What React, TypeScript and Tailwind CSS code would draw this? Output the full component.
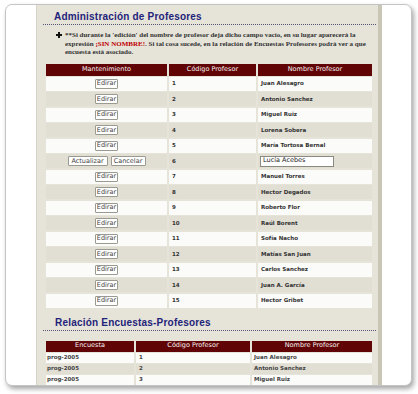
import React from 'react';

const profesores: [string, string][] = [
  ['1', 'Juan Alesagro'],
  ['2', 'Antonio Sanchez'],
  ['3', 'Miguel Ruiz'],
  ['4', 'Lorena Sobera'],
  ['5', 'María Tortosa Bernal'],
  ['6', 'Lucía Acebes'],
  ['7', 'Manuel Torres'],
  ['8', 'Hector Degados'],
  ['9', 'Roberto Flor'],
  ['10', 'Raúl Borent'],
  ['11', 'Sofía Nacho'],
  ['12', 'Matías San Juan'],
  ['13', 'Carlos Sanchez'],
  ['14', 'Juan A. García'],
  ['15', 'Hector Gribet'],
];

const relacion: [string, string, string][] = [
  ['prog-2005', '1', 'Juan Alesagro'],
  ['prog-2005', '2', 'Antonio Sanchez'],
  ['prog-2005', '3', 'Miguel Ruiz'],
];

function Btn({ label, w }: { label: string; w: string }) {
  return (
    <span
      className={`${w} h-[10px] flex items-center justify-center bg-white border border-[#9a9a90] rounded-[1px] text-[6.5px] leading-none font-normal text-[#444] font-['DejaVu_Sans',sans-serif]`}
    >
      {label}
    </span>
  );
}

function SectionTitle({ text, className }: { text: string; className: string }) {
  return (
    <div className={`ml-[6px] mr-[2px] border-b border-dotted border-[#55557a] ${className}`}>
      <div className="pl-[11px] h-[14px] leading-[14px] text-[10px] font-bold tracking-[0.2px] text-[#1f237a] font-['Liberation_Sans',sans-serif]">
        {text}
      </div>
    </div>
  );
}

export default function App() {
  return (
    <div className="w-[418px] h-[394px] bg-white pt-[4px] pl-[5px]">
      <div className="w-[407px] h-[382px] flex overflow-hidden rounded-[7px] border border-[#c4c4c4] bg-white shadow-[2px_3px_5px_rgba(0,0,0,0.35)]">
        <div className="w-[30px] shrink-0" />
        <div className="w-[346px] shrink-0 h-full bg-[#e6e3d9] border-l border-[#d6d3c8] border-r-[4px] border-r-[#c9c6b8] pt-[5px]">
          <SectionTitle text="Administración de Profesores" className="" />

          <div className="mt-[6px] ml-[19px] mr-[2px] flex gap-[3px]">
            <svg width="6" height="6" viewBox="0 0 6 6" className="mt-[1px] shrink-0">
              <path d="M2 0h2v2h2v2H4v2H2V4H0V2h2z" fill="#111" />
            </svg>
            <p className="whitespace-nowrap text-[7px] leading-[8.5px] font-bold text-[#333] font-['Liberation_Serif',serif]">
              **Si durante la 'edición' del nombre de profesor deja dicho campo vacío, en su lugar aparecerá la
              <br />
              expresión <span className="text-[#c00000]">¡SIN NOMBRE!</span>. Si tal cosa sucede, en la relación de Encuestas Profesores podrá ver a que
              <br />
              encuesta está asociado.
            </p>
          </div>

          <div className="mt-[7px] ml-[9px] w-[326px]">
            <div className="grid grid-cols-[121px_87px_114px] gap-x-[2px] h-[12px] mb-[1px] text-[6.5px] text-[#f8f2f2] font-['DejaVu_Sans',sans-serif]">
              <div className="bg-[#600406] flex items-center justify-center">Mantenimiento</div>
              <div className="bg-[#600406] flex items-center justify-center">Código Profesor</div>
              <div className="bg-[#600406] flex items-center justify-center">Nombre Profesor</div>
            </div>
            <div className="grid gap-y-[1.5px]">
              {profesores.map(([cod, nombre], i) => {
                const bg = i % 2 === 0 ? 'bg-[#fbfbfa]' : 'bg-[#e1ded3]';
                const editing = cod === '6';
                return (
                  <div key={cod} className="grid grid-cols-[121px_87px_114px] gap-x-[2px] h-[14px] text-[5.5px] font-bold text-[#333] font-['DejaVu_Sans',sans-serif]">
                    <div className={`${bg} flex items-center justify-center gap-[3px]`}>
                      {editing ? (
                        <>
                          <Btn label="Actualizar" w="w-[40px]" />
                          <Btn label="Cancelar" w="w-[35px]" />
                        </>
                      ) : (
                        <Btn label="Edirar" w="w-[23px]" />
                      )}
                    </div>
                    <div className={`${bg} flex items-center pl-[3px]`}>{cod}</div>
                    <div className={`${bg} flex items-center pl-[2px]`}>
                      {editing ? (
                        <span className="w-[74px] h-[11px] bg-white border border-[#8a8a80] flex items-center pl-[2px] text-[6.5px] font-normal text-[#222]">
                          {nombre}
                        </span>
                      ) : (
                        <span className="pl-[1px]">{nombre}</span>
                      )}
                    </div>
                  </div>
                );
              })}
            </div>
          </div>

          <SectionTitle text="Relación Encuestas-Profesores" className="mt-[8px] [&>div]:pl-[12px]" />

          <div className="mt-[10px] ml-[9px] w-[326px]">
            <div className="grid grid-cols-[88px_114px_120px] gap-x-[2px] h-[11px] mb-[1px] text-[6.5px] text-[#f8f2f2] font-['DejaVu_Sans',sans-serif]">
              <div className="bg-[#600406] flex items-center justify-center">Encuesta</div>
              <div className="bg-[#600406] flex items-center justify-center">Código Profesor</div>
              <div className="bg-[#600406] flex items-center justify-center">Nombre Profesor</div>
            </div>
            <div className="grid gap-y-[1px]">
              {relacion.map(([enc, cod, nombre], i) => {
                const bg = i % 2 === 0 ? 'bg-[#fbfbfa]' : 'bg-[#e1ded3]';
                return (
                  <div key={cod} className="grid grid-cols-[88px_114px_120px] gap-x-[2px] h-[10px] text-[5.5px] font-bold text-[#444] font-['DejaVu_Sans',sans-serif]">
                    <div className={`${bg} flex items-center pl-[1px]`}>{enc}</div>
                    <div className={`${bg} flex items-center pl-[3px]`}>{cod}</div>
                    <div className={`${bg} flex items-center pl-[2px]`}>{nombre}</div>
                  </div>
                );
              })}
            </div>
          </div>
        </div>
        <div className="flex-1" />
      </div>
    </div>
  );
}
